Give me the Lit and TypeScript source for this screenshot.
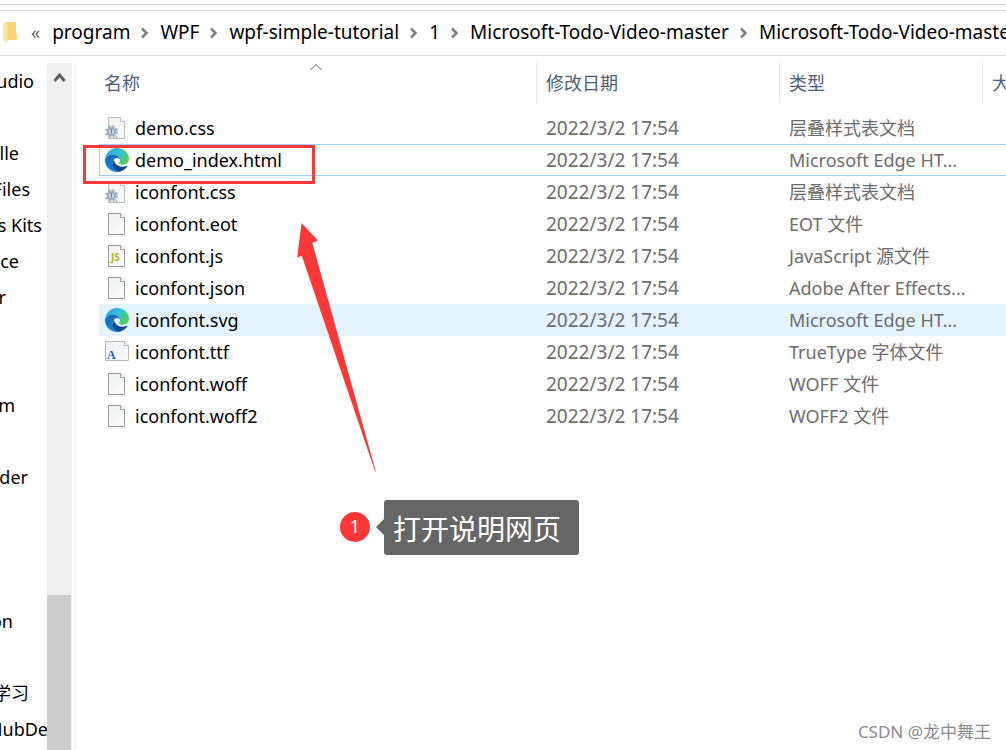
import { LitElement, html, css, svg, nothing } from "lit";
import { customElement, property, state } from "lit/decorators.js";

type Kind = "css" | "edge" | "blank" | "js" | "font";

interface FileRow {
  name: string;
  type: string;
  kind: Kind;
}

const MODIFIED = "2022/3/2 17:54";

const FILES: FileRow[] = [
  { name: "demo.css", type: "层叠样式表文档", kind: "css" },
  { name: "demo_index.html", type: "Microsoft Edge HT...", kind: "edge" },
  { name: "iconfont.css", type: "层叠样式表文档", kind: "css" },
  { name: "iconfont.eot", type: "EOT 文件", kind: "blank" },
  { name: "iconfont.js", type: "JavaScript 源文件", kind: "js" },
  { name: "iconfont.json", type: "Adobe After Effects...", kind: "blank" },
  { name: "iconfont.svg", type: "Microsoft Edge HT...", kind: "edge" },
  { name: "iconfont.ttf", type: "TrueType 字体文件", kind: "font" },
  { name: "iconfont.woff", type: "WOFF 文件", kind: "blank" },
  { name: "iconfont.woff2", type: "WOFF2 文件", kind: "blank" },
];

const PATH = [
  "program",
  "WPF",
  "wpf-simple-tutorial",
  "1",
  "Microsoft-Todo-Video-master",
  "Microsoft-Todo-Video-master",
];

// Tree labels run out of the left edge of the pane; `end` is where each one stops.
const TREE: { label: string; end: number }[] = [
  { label: "udio", end: 34 },
  { label: "", end: 0 },
  { label: "lle", end: 19 },
  { label: "Files", end: 30 },
  { label: "s Kits", end: 42 },
  { label: "ce", end: 19 },
  { label: "r", end: 6 },
  { label: "", end: 0 },
  { label: "", end: 0 },
  { label: "m", end: 15 },
  { label: "", end: 0 },
  { label: "der", end: 28 },
  { label: "", end: 0 },
  { label: "", end: 0 },
  { label: "", end: 0 },
  { label: "on", end: 13 },
  { label: "", end: 0 },
  { label: "学习", end: 29 },
  { label: "HubDe", end: 48 },
];

@customElement("file-icon")
class FileIcon extends LitElement {
  @property() kind: Kind = "blank";

  static styles = css`
    :host {
      display: block;
      width: 24px;
      height: 24px;
    }
    svg {
      display: block;
    }
    .js {
      font: bold 10px "Noto Sans", sans-serif;
      fill: #b4b81c;
    }
    .a {
      font: bold 12px "Liberation Serif", serif;
      fill: #2f55c4;
    }
  `;

  private page() {
    return svg`
      <path d="M3.5 1.5H15.5L19.5 5.5V22.5H3.5Z" fill="url(#paper)" stroke="#9a9a9a"/>
      <path d="M15.5 1.5V5.5H19.5" fill="#fff" stroke="#9a9a9a"/>`;
  }

  private art() {
    switch (this.kind) {
      case "edge":
        return svg`
          <path d="M0.2 10.500C1.200 4.300 6 0 12 0C19 0 24 5 24 10.800C24 14.500 21.400 16.700 18 16.700C15.500 16.700 14 15.900 14 14.900C14 14.300 15 13.700 15 12C15 9 11.500 6.500 7.500 6.500C4 6.500 1.500 8 .2 10.500Z" fill="url(#kelp)"/>
          <path d="M0 12C.2 9 3.500 6.500 7.500 6.500C12 6.500 15 9.200 15 12C14.800 10.800 13.500 9.700 11.700 9.900C7.500 10.600 6.500 16 9 19.500C10.500 21.700 13 23.500 15.500 23.400C14.400 23.800 13.200 24 12 24C5.400 24 0 18.600 0 12Z" fill="url(#wave)"/>
          <path d="M9.200 11.400C6.500 14.500 7.200 19 10 21.600C11.700 23 13.700 23.700 15.500 23.400C18.400 22.600 20.800 20.800 22.300 18.500C22.700 17.800 22.300 17.500 21.700 17.800C17.500 19.700 12.600 18.700 10.500 15.600C9.500 14.200 9.100 12.800 9.200 11.400Z" fill="#114a8b"/>`;
      case "css":
        return svg`
          <path d="M3.5 1.5H15.5L19.5 5.500V22.5H3.5Z" fill="url(#paper)" stroke="#bdbdbd"/>
          <path d="M15.5 1.500V5.500H19.5" fill="#fff" stroke="#bdbdbd"/>
          <circle cx="6.500" cy="15.500" r="5" fill="none" stroke="#9fb0bf" stroke-width="2.600" stroke-dasharray="2.300 1.630"/>
          <circle cx="6.500" cy="15.500" r="3.400" fill="#e4edf4" stroke="#94a8b9" stroke-width="1.800"/>
          <path d="M6.500 13V17.500" stroke="#6f8599" stroke-width="1.600"/>
          <circle cx="10" cy="21" r="1.800" fill="#d5dfe7" stroke="#94a8b9" stroke-dasharray="1 .6"/>`;
      case "js":
        return svg`${this.page()}<text class="js" x="6" y="17">JS</text>`;
      case "font":
        return svg`
          <path d="M.5 1.500H19.500L23.500 5.500V20.500H.5Z" fill="url(#paper)" stroke="#b8b8b8"/>
          <path d="M19.500 1.500V5.500H23.500" fill="#fff" stroke="#b8b8b8"/>
          <text class="a" x="2" y="19">A</text>`;
      default:
        return this.page();
    }
  }

  render() {
    return html`<svg width="24" height="24" viewBox="0 0 24 24" aria-hidden="true">
      <defs>
        <linearGradient id="paper" x1="0" y1="0" x2="1" y2="1">
          <stop offset="0" stop-color="#eef0f2" />
          <stop offset="1" stop-color="#fbfcfc" />
        </linearGradient>
        <linearGradient id="kelp" x1="0" y1="0.2" x2="1" y2="0.7">
          <stop offset="0" stop-color="#2a9fe0" />
          <stop offset="0.5" stop-color="#34c1d8" />
          <stop offset="0.8" stop-color="#45cb7e" />
          <stop offset="1" stop-color="#62d14e" />
        </linearGradient>
        <linearGradient id="wave" x1="0.3" y1="0" x2="0.4" y2="1">
          <stop offset="0" stop-color="#1469b4" />
          <stop offset="1" stop-color="#1688e0" />
        </linearGradient>
      </defs>
      ${this.art()}
    </svg>`;
  }
}

@customElement("address-bar")
class AddressBar extends LitElement {
  static styles = css`
    :host {
      display: block;
      padding-top: 4px;
      font-size: 19px;
    }
    .bar {
      display: flex;
      align-items: center;
      height: 44px;
      margin-top: 5px;
      border-top: 1px solid #d9d9d9;
      border-bottom: 1px solid #d9d9d9;
      overflow: hidden;
    }
    .rule {
      height: 1px;
      background: #d9d9d9;
    }
    .folder {
      flex: none;
      margin-left: 2px;
    }
    .more {
      border: 0;
      padding: 0 0 2px;
      margin: 0 12px 0 13px;
      background: none;
      color: #666;
      font-family: inherit;
      font-size: 18px;
      line-height: 24px;
    }
    .path {
      display: flex;
      align-items: center;
      margin: 0;
      padding: 0 0 2px;
      list-style: none;
    }
    .step {
      display: flex;
      align-items: center;
      flex: none;
      line-height: 24px;
      white-space: nowrap;
    }
    .chevron {
      margin: 2px 10px 0;
    }
    .link {
      color: #000;
      text-decoration: none;
    }
  `;

  render() {
    return html`
      <div class="rule"></div>
      <nav class="bar" aria-label="地址">
        <svg class="folder" width="16" height="24" viewBox="0 0 16 24" aria-hidden="true">
          <path d="M4 1H14V12L15 13V19H4Z" fill="#f9d672" />
          <path d="M1 1.500L5.500 4V22L1 19Z" fill="#fce6a6" />
        </svg>
        <button class="more" aria-label="«">«</button>
        <ol class="path">
          ${PATH.map(
            (p, i) => html`<li class="step">
              ${i
                ? html`<svg class="chevron" width="10" height="12" viewBox="0 0 10 12" aria-hidden="true">
                    <path d="M2 1.500L6.500 6L2 10.500" fill="none" stroke="#808080" stroke-width="2.500" />
                  </svg>`
                : nothing}<a class="link" href="#">${p}</a>
            </li>`,
          )}
        </ol>
      </nav>
    `;
  }
}

@customElement("folder-tree")
class FolderTree extends LitElement {
  static styles = css`
    :host {
      display: flex;
      flex: none;
      width: 76px;
      overflow: hidden;
    }
    .list {
      flex: none;
      width: 47px;
      margin: 0;
      padding: 7px 0 0;
      list-style: none;
      overflow: hidden;
    }
    .item {
      display: flex;
      justify-content: flex-end;
      height: 36px;
      line-height: 36px;
      font-size: 18px;
      white-space: nowrap;
    }
    .scroll {
      flex: none;
      display: flex;
      flex-direction: column;
      width: 25px;
      margin-top: 7px;
      background: #f0f0f0;
    }
    .up {
      display: flex;
      justify-content: center;
      height: 32px;
      padding: 9px 0 0;
      border: 0;
      background: none;
    }
    .track {
      flex: 500;
    }
    .thumb {
      flex: 155;
      width: 24px;
      background: #cdcdcd;
    }
    .edge {
      width: 2px;
      margin: 7px 0 0 2px;
      background: #f5f5f5;
    }
  `;

  render() {
    return html`
      <ul class="list">
        ${TREE.map((t) => html`<li class="item" style="width:${t.end}px">${t.label}</li>`)}
      </ul>
      <div class="scroll">
        <button class="up" aria-label="向上滚动">
          <svg width="13" height="11" viewBox="0 0 13 11" aria-hidden="true">
            <path d="M1.500 9L6.500 3L11.500 9" fill="none" stroke="#606060" stroke-width="3" />
          </svg>
        </button>
        <div class="track"></div>
        <div class="thumb"></div>
      </div>
      <div class="edge"></div>
    `;
  }
}

@customElement("file-table")
class FileTable extends LitElement {
  @state() private focused = "demo_index.html";
  @state() private hovered = "iconfont.svg";

  static styles = css`
    :host {
      display: block;
      flex: 1;
      min-width: 0;
      padding: 7px 0 0 23px;
      overflow: hidden;
    }
    .table {
      width: 100%;
      table-layout: fixed;
      border-collapse: separate;
      border-spacing: 0;
      font-size: 18px;
    }
    .c-name {
      width: 437px;
    }
    .c-date {
      width: 243px;
    }
    .c-type {
      width: 203px;
    }
    .head {
      position: relative;
      height: 38px;
      padding: 0 0 2px 9px;
      border-left: 1px solid #e5e5e5;
      color: #4c607a;
      font-weight: normal;
      text-align: left;
      white-space: nowrap;
      overflow: hidden;
    }
    .head:first-child {
      border-left: 0;
      padding-left: 5px;
    }
    .sort {
      position: absolute;
      top: 0;
      left: 50%;
      margin-left: -9px;
    }
    .gap {
      height: 9px;
      padding: 0;
    }
    .cell {
      height: 30px;
      padding: 0 0 0 10px;
      border: solid transparent;
      border-width: 1px 0;
      color: #6d6d6d;
      line-height: 30px;
      white-space: nowrap;
      overflow: hidden;
    }
    .date {
      font-size: 19px;
    }
    .cell:first-child {
      padding-left: 5px;
      border-left-width: 1px;
      color: #000;
    }
    .focused .cell {
      border-color: #99d1ff;
    }
    .hovered .cell {
      background: #e5f3ff;
      border-color: #e5f3ff;
    }
    .file {
      display: flex;
      align-items: center;
      gap: 6px;
    }
  `;

  render() {
    return html`
      <table class="table">
        <colgroup>
          <col class="c-name" />
          <col class="c-date" />
          <col class="c-type" />
          <col />
        </colgroup>
        <thead>
          <tr>
            <th class="head" scope="col">
              名称
              <svg class="sort" width="14" height="8" viewBox="0 0 14 8" aria-hidden="true">
                <path d="M1.500 7L7 1.500L12.500 7" fill="none" stroke="#666" />
              </svg>
            </th>
            <th class="head" scope="col">修改日期</th>
            <th class="head" scope="col">类型</th>
            <th class="head" scope="col">大小</th>
          </tr>
        </thead>
        <tbody>
          <tr aria-hidden="true"><td class="gap" colspan="4"></td></tr>
          ${FILES.map(
            (f) => html`<tr
              class=${f.name === this.focused ? "focused" : f.name === this.hovered ? "hovered" : ""}
            >
              <td class="cell">
                <div class="file"><file-icon .kind=${f.kind}></file-icon>${f.name}</div>
              </td>
              <td class="cell date">${MODIFIED}</td>
              <td class="cell">${f.type}</td>
              <td class="cell"></td>
            </tr>`,
          )}
        </tbody>
      </table>
    `;
  }
}

@customElement("app-root")
class AppRoot extends LitElement {
  static styles = css`
    :host {
      display: flex;
      flex-direction: column;
      position: relative;
      height: 100vh;
      overflow: hidden;
      background: #fff;
      color: #000;
      font-family: "Noto Sans", "Noto Sans CJK SC", sans-serif;
    }
    .body {
      flex: 1;
      display: flex;
      min-height: 0;
    }
    .frame {
      position: absolute;
      left: 83px;
      top: 145px;
      width: 226px;
      height: 33px;
      border: 3px solid #fb3838;
    }
    .arrow {
      position: absolute;
      left: 290px;
      top: 220px;
    }
    .note {
      position: absolute;
      left: 340px;
      top: 500px;
      display: flex;
      align-items: center;
    }
    .badge {
      width: 30px;
      height: 30px;
      margin-bottom: 1px;
      border-radius: 50%;
      background: #fb3838;
      color: #fff;
      font-size: 18px;
      line-height: 28px;
      text-align: center;
    }
    .tip {
      margin: 0 0 1px 6px;
      border: solid transparent;
      border-width: 8px 8px 8px 0;
      border-right-color: #666;
    }
    .bubble {
      height: 55px;
      padding: 0 18px 0 9px;
      border-radius: 3px;
      background: #666;
      color: #fff;
      font-size: 28px;
      line-height: 59px;
    }
    .mark {
      position: absolute;
      right: 15px;
      bottom: 7px;
      color: #8c8c8c;
      font-size: 17px;
      line-height: 22px;
    }
  `;

  render() {
    return html`
      <address-bar></address-bar>
      <main class="body">
        <folder-tree></folder-tree>
        <file-table></file-table>
      </main>
      <div class="frame"></div>
      <svg class="arrow" width="90" height="256" viewBox="0 0 90 256" aria-hidden="true">
        <path d="M11.500 3L28 20.500L22.300 22.800L85.800 251.500L85.200 251.700L11.800 35.800L7.200 37.500Z" fill="#fb3838" />
      </svg>
      <div class="note">
        <span class="badge">1</span>
        <span class="tip"></span>
        <span class="bubble">打开说明网页</span>
      </div>
      <div class="mark">CSDN @龙中舞王</div>
    `;
  }
}
